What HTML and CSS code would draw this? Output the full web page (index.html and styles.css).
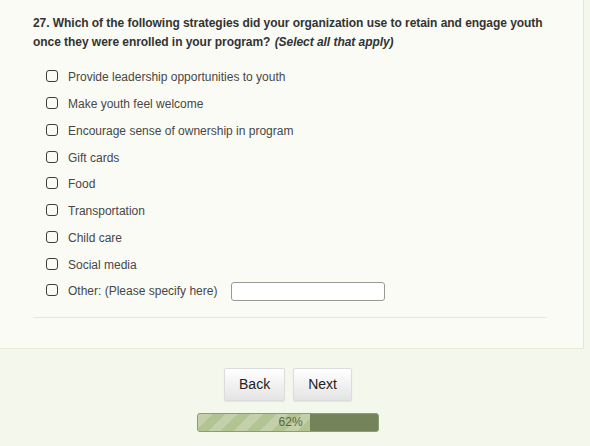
FILE: index.html
```html
<!DOCTYPE html>
<html lang="en">
<head>
    <meta charset="UTF-8">
    <meta name="viewport" content="width=device-width, initial-scale=1.0">
    <title>Survey - Question 27</title>
    <link rel="stylesheet" href="styles.css">
</head>
<body>
    <div class="panel">
        <p class="question">27. Which of the following strategies did your organization use to retain and engage youth once they were enrolled in your program? <em>(Select all that apply)</em></p>
        <ul class="options">
            <li><label><input type="checkbox"> Provide leadership opportunities to youth</label></li>
            <li><label><input type="checkbox"> Make youth feel welcome</label></li>
            <li><label><input type="checkbox"> Encourage sense of ownership in program</label></li>
            <li><label><input type="checkbox"> Gift cards</label></li>
            <li><label><input type="checkbox"> Food</label></li>
            <li><label><input type="checkbox"> Transportation</label></li>
            <li><label><input type="checkbox"> Child care</label></li>
            <li><label><input type="checkbox"> Social media</label></li>
            <li><label><input type="checkbox"> Other: (Please specify here)</label><input type="text" class="other-text"></li>
        </ul>
        <div class="separator"></div>
    </div>
    <div class="footer">
        <div class="nav">
            <button type="button">Back</button>
            <button type="button">Next</button>
        </div>
        <div class="progress-bar">
            <div class="progress" style="width: 62%">62%</div>
        </div>
    </div>
</body>
</html>
```

FILE: styles.css
```css
body {
    margin: 0;
    font-family: "Liberation Sans", Arial, sans-serif;
    font-size: 12px;
    color: #474747;
    background-color: #f4f7ec;
}
.panel {
    width: 583px;
    background-color: #fafbf5;
    border-right: 1px solid #e1e7d4;
    border-bottom: 1px solid #e4e9da;
    padding: 14px 0 30px 0;
}
.question {
    margin: 0 0 12px 33px;
    padding-right: 30px;
    line-height: 19px;
    letter-spacing: -0.05px;
    font-weight: bold;
    color: #333;
}
.question em {
    font-weight: bold;
    margin-left: 1px;
}
.options {
    list-style: none;
    margin: 0;
    padding: 0 0 0 46px;
}
.options li {
    height: 26.75px;
    display: flex;
    align-items: center;
}
.options label {
    display: flex;
    align-items: center;
}
.options input[type="checkbox"] {
    appearance: none;
    -webkit-appearance: none;
    width: 12px;
    height: 12px;
    margin: -2px 10px 0 0;
    border: 1px solid #3d3d3d;
    border-radius: 3px;
    background-color: transparent;
}
.other-text {
    margin-left: 14px;
    width: 152px;
    height: 17px;
    padding: 0;
    border: 1px solid #999;
    border-radius: 3px;
    background-color: #fff;
}
.separator {
    margin: 12px 36px 0 33px;
    border-top: 1px solid #e6e8e0;
}
.footer {
    width: 576px;
    display: flex;
    flex-direction: column;
    align-items: center;
    padding-top: 19px;
}
.nav {
    display: flex;
    gap: 8px;
}
button {
    height: 33px;
    padding: 0 14px;
    font-family: "Liberation Sans", Arial, sans-serif;
    font-size: 14px;
    color: #222;
    background: linear-gradient(#ffffff, #e4e4e4);
    border: 1px solid #dcdcdc;
    border-radius: 2px;
    box-shadow: 0 1px 1px rgba(0, 0, 0, 0.08);
}
.progress-bar {
    width: 180px;
    height: 17px;
    margin-top: 12px;
    background-color: #74835a;
    border: 1px solid #8d9c72;
    border-radius: 3px;
    overflow: hidden;
}
.progress {
    height: 100%;
    box-sizing: border-box;
    padding-right: 7px;
    text-align: right;
    line-height: 17px;
    color: #5b6447;
    background-color: #b3c493;
    background-image: repeating-linear-gradient(-45deg, #b3c493 0 9px, #c3d0aa 9px 18px);
}
```
